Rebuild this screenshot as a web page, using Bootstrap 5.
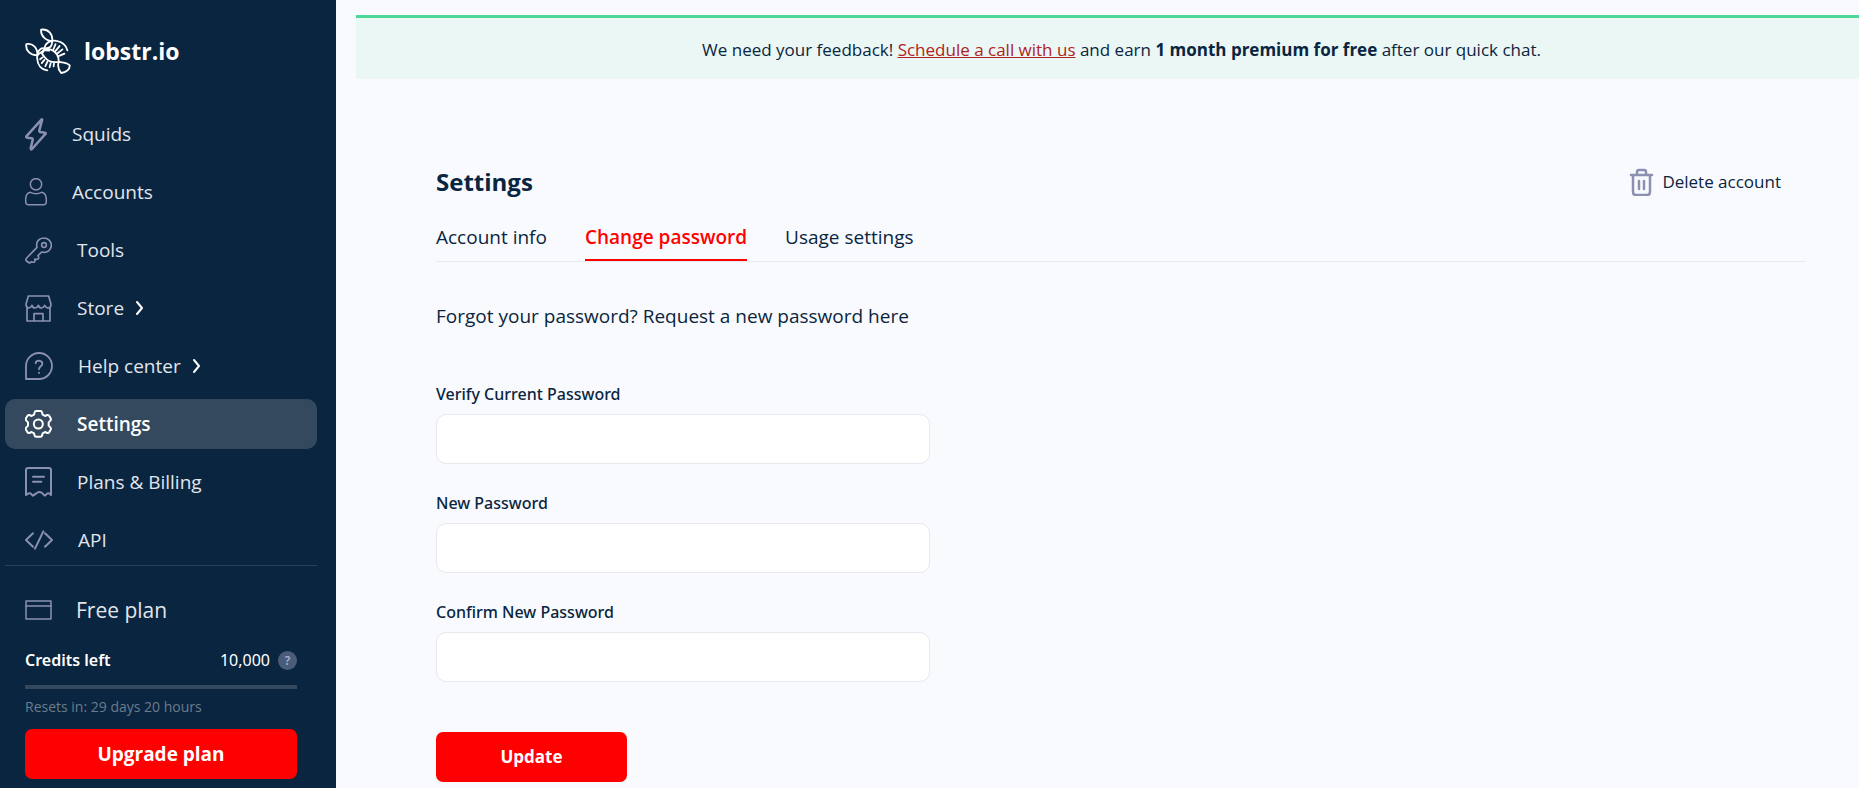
<!DOCTYPE html>
<html lang="en">
<head>
<meta charset="utf-8">
<meta name="viewport" content="width=device-width, initial-scale=1">
<title>Settings - lobstr.io</title>
<link href="https://cdn.jsdelivr.net/npm/bootstrap@5.3.0/dist/css/bootstrap.min.css" rel="stylesheet">
<style>
:root { --navy: #0a2540; --muted: #8c90b0; --line: #e7e9ee; --brand-red: #ff0000; }
body { font-family: "Open Sans", "Noto Sans", sans-serif; font-size: 19px; line-height: 24px; color: var(--navy); background: #f8fafe; }
svg { fill: none; stroke: currentColor; stroke-linecap: round; stroke-linejoin: round; flex: none; }
.side { width: 336px; background: var(--navy); color: #e1e6ec; padding: 28px 19px 8px 5px; }
.brand { font-size: 23px; font-weight: 700; color: #fff; padding-left: 20px; gap: 13px; margin-bottom: 35px; }
.side-nav { gap: 8px; border-bottom: 1px solid #29405a; }
.side-nav .nav-link { height: 50px; padding: 0 20px; gap: 25px; color: #e1e6ec; border-radius: 10px; }
.side-nav .nav-link svg, .plan svg, .trash { color: var(--muted); }
.side-nav .nav-link.active { background: #34495e; color: #fff; font-weight: 600; }
.side-nav .nav-link.active svg { color: #fff; }
.side-nav .chevron { margin-left: -13px; }
.side-nav .nav-link .chevron { color: #fff; }
.plan { padding: 30px 20px 0; }
.plan-name { font-size: 21px; gap: 24px; line-height: 28px; }
.credits, .pw-form .form-label { font-family: "Noto Sans", "Open Sans", sans-serif; font-size: 16px; }
.credits { color: #fff; margin-top: 24px; }
.help-dot { width: 19px; height: 19px; border-radius: 50%; background: #4a5d78; color: #a9b0cc; font-size: 12px; font-weight: 600; line-height: 19px; }
.credit-bar { height: 4px; border-radius: 0; margin-top: 13px; --bs-progress-bg: #34495e; }
.resets { font-size: 14px; color: #6c7c8c; line-height: 20px; margin: 8px 0 12px; }
.btn-red { --bs-btn-bg: var(--brand-red); --bs-btn-color: #fff; --bs-btn-hover-bg: #d90000; --bs-btn-hover-color: #fff; --bs-btn-border-width: 0; --bs-btn-border-radius: 7px; --bs-btn-font-size: 19px; --bs-btn-font-weight: 700; height: 50px; }
.btn-update { width: 191px; --bs-btn-font-size: 17px; }
.feedback { margin: 15px 0 0 20px; padding: 20px 0 17px 28px; border-top: 3px solid #4dd898; background: #eaf7f4; font-size: 17px; line-height: 24px; }
.feedback a { color: #b22222; }
.content { padding: 87px 53px 7px 100px; }
.content h1 { font-size: 24px; font-weight: 700; line-height: 32px; }
.delete { color: var(--navy); font-size: 17px; gap: 8px; margin-right: 25px; }
.tabs { gap: 38px; margin-top: 27px; border-bottom: 1px solid var(--line); }
.tabs .nav-link { padding: 0 0 10px; color: var(--navy); border-bottom: 2px solid transparent; }
.tabs .nav-link.active { color: var(--brand-red); font-weight: 600; border-color: var(--brand-red); }
.forgot { margin: 42px 0 54px; }
.pw-form { max-width: 494px; }
.pw-form .form-label { font-weight: 500; margin-bottom: 8px; }
.pw-form .form-control { height: 50px; border: 1px solid var(--line); border-radius: 10px; margin-bottom: 27px; }
.pw-form .btn-update { margin-top: 23px; }
</style>
</head>
<body>
<div class="d-flex min-vh-100">
  <aside class="side flex-shrink-0">
    <a href="#" class="brand d-flex align-items-center text-decoration-none">
      <svg width="46" height="46" viewBox="74 82 140 140" stroke-width="5.500"><path d="M112 164C90 167 75 150 78 131C98 127 112 142 112 164ZM157 122C138 122 121 106 123 87C145 84 159 100 157 122ZM177 185C190 188 202 187 210 196C211 207 200 217 184 219C177 210 172 197 177 185Z"/><path d="M134 146C133 130 150 117 169 121C188 124 200 136 203 150M134 146C124 139 110 150 111 174C112 195 124 209 142 211"/><path d="M112 164C120 158 130 153 134 146C143 138 155 150 157 122M137 150L148 151M126 160C130 148 142 142 154 148C167 154 177 166 177 185C160 188 143 183 134 171C130 166 127 163 126 160ZM161 146L167 131M168 151L179 137M174 158L188 147M178 167L194 160M127 172L120 177M133 179L125 189M142 185L136 198M152 189L149 201M162 190L161 199"/></svg>
      <span>lobstr.io</span>
    </a>
    <nav class="nav flex-column side-nav" aria-label="Main">
      <a href="#" class="nav-link d-flex align-items-center"><svg width="22" height="33" viewBox="75 349 66 99" stroke-width="7.500"><path d="M125 353L79 404Q78 407 82 408L95 410Q99 411 98 415L92 440Q92 445 96 442L137 396Q138 394 135 393L120 391Q117 390 118 386L126 356Q127 352 125 353Z"/></svg>Squids</a>
      <a href="#" class="nav-link d-flex align-items-center"><svg width="22" height="28" viewBox="75 534 66 84" stroke-width="4.500"><circle cx="108" cy="553" r="17"/><path d="M91 577C80 579 77 588 77 599V606Q77 614 85 614H131Q139 614 139 606V599C139 588 136 579 125 577Q108 585 91 577Z"/></svg>Accounts</a>
      <a href="#" class="nav-link d-flex align-items-center"><svg width="27" height="27" viewBox="75 47 81 81" stroke-width="5"><circle cx="132" cy="71" r="7"/><path d="M111 78C106 60 119 50 131 50C144 50 154 60 154 72C154 85 142 97 125 92L114 103C119 112 114 116 104 113C107 122 102 125 94 121C91 127 87 126 78 117Q77 113 80 110Z"/></svg>Tools</a>
      <a href="#" class="nav-link d-flex align-items-center"><svg width="27" height="27" viewBox="75 219 81 81" stroke-width="5"><path d="M85 222H146L153 247Q153 257 146 258Q138 258 134 250Q130 258 124 258Q118 258 115 250Q111 258 105 258Q99 258 96 250Q92 258 86 258Q78 257 78 247ZM81 258V297H150V258M102 297V275H129V297"/></svg>Store<svg class="chevron" width="8" height="16" viewBox="0 0 8 16" stroke-width="2"><path d="M1 2L6 8L1 14"/></svg></a>
      <a href="#" class="nav-link d-flex align-items-center"><svg width="28" height="28" viewBox="75 390 84 84" stroke-width="5.500"><path d="M78 471V431A39 39 0 1 1 117 471ZM107 424Q107 416 117 416Q127 417 127 425C127 433 117 433 117 442M117 452V453"/></svg>Help center<svg class="chevron" width="8" height="16" viewBox="0 0 8 16" stroke-width="2"><path d="M1 2L6 8L1 14"/></svg></a>
      <a href="#" class="nav-link d-flex align-items-center active" aria-current="page"><svg width="27" height="28" viewBox="74 53 81 84" stroke-width="6"><circle cx="114" cy="95" r="13.500"/><path d="M107 56H121Q124 56 125 60L127 67L134 71L141 68Q145 67 147 71L151 78Q153 82 150 85L145 90V100L150 105Q153 108 151 112L147 119Q145 123 141 122L134 119L127 123L125 130Q124 133 121 133H107Q104 133 103 130L101 123L94 119L87 122Q83 123 81 119L77 112Q75 108 78 105L83 100V90L78 85Q75 82 77 78L81 71Q83 67 87 68L94 71L101 67L103 60Q104 56 107 56Z"/></svg>Settings</a>
      <a href="#" class="nav-link d-flex align-items-center"><svg width="27" height="30" viewBox="74 224 81 90" stroke-width="6"><path d="M77 308V234Q77 227 84 227H145Q152 227 152 234V308Q146 301 142 303L133 310L124 301Q115 296 108 303L98 310L90 303Q84 301 77 308ZM98 253H131M98 268H123"/></svg>Plans &amp; Billing</a>
      <a href="#" class="nav-link d-flex align-items-center"><svg width="28" height="20" viewBox="75 410 84 60" stroke-width="6"><path d="M99 420L78 440L99 460M135 420L156 440L135 460M130 414L105 466"/></svg>API</a>
    </nav>
    <section class="plan">
      <div class="plan-name d-flex align-items-center"><svg width="27" height="20" viewBox="0 0 27 20" stroke-width="1.500"><rect x="1" y="1" width="25" height="18"/><path d="M1 6H26"/></svg>Free plan</div>
      <div class="credits d-flex align-items-center"><span class="fw-semibold me-auto">Credits left</span><span>10,000</span><span class="help-dot text-center ms-2">?</span></div>
      <div class="progress credit-bar" role="progressbar" aria-label="Credits used" aria-valuenow="0" aria-valuemin="0" aria-valuemax="100"></div>
      <p class="resets">Resets in: 29 days 20 hours</p>
      <button type="button" class="btn btn-red w-100">Upgrade plan</button>
    </section>
  </aside>
  <main class="flex-grow-1">
    <div class="feedback text-center">We need your feedback! <a href="#">Schedule a call with us</a> and earn <strong>1 month premium for free</strong> after our quick chat.</div>
    <div class="content">
      <div class="d-flex align-items-center justify-content-between">
        <h1 class="m-0">Settings</h1>
        <button type="button" class="btn delete d-flex align-items-center p-0 border-0"><svg class="trash" width="25" height="28" viewBox="0 0 25 28" stroke-width="2.500"><path d="M2 7H23M8 7V4Q8 2 10 2H15Q17 2 17 4V7M4 7V24Q4 27 7 27H18Q21 27 21 24V7M10 13V21M15 13V21"/></svg>Delete account</button>
      </div>
      <nav class="nav tabs" aria-label="Settings sections">
        <a href="#" class="nav-link">Account info</a>
        <a href="#" class="nav-link active" aria-current="page">Change password</a>
        <a href="#" class="nav-link">Usage settings</a>
      </nav>
      <p class="forgot">Forgot your password? Request a new password here</p>
      <form class="pw-form">
        <label class="form-label d-block" for="current">Verify Current Password</label>
        <input class="form-control" type="password" id="current">
        <label class="form-label d-block" for="new">New Password</label>
        <input class="form-control" type="password" id="new">
        <label class="form-label d-block" for="confirm">Confirm New Password</label>
        <input class="form-control" type="password" id="confirm">
        <button type="submit" class="btn btn-red btn-update">Update</button>
      </form>
    </div>
  </main>
</div>
<script src="https://cdn.jsdelivr.net/npm/bootstrap@5.3.0/dist/js/bootstrap.bundle.min.js"></script>
</body>
</html>
